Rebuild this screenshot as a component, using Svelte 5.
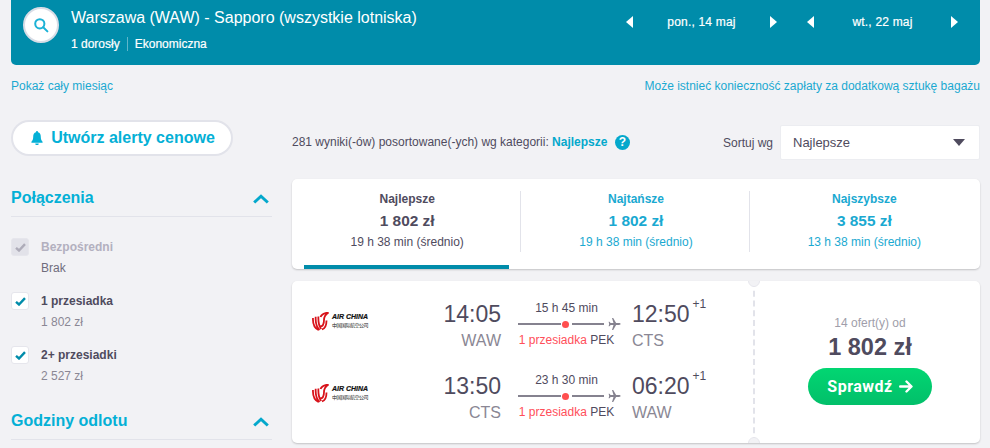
<script lang="ts">
  const tabs = [
    { name: "Najlepsze", price: "1 802 zł", time: "19 h 38 min (średnio)", active: true },
    { name: "Najtańsze", price: "1 802 zł", time: "19 h 38 min (średnio)", active: false },
    { name: "Najszybsze", price: "3 855 zł", time: "13 h 38 min (średnio)", active: false }
  ];

  const legs = [
    { dep: "14:05", from: "WAW", dur: "15 h 45 min", arr: "12:50", to: "CTS" },
    { dep: "13:50", from: "CTS", dur: "23 h 30 min", arr: "06:20", to: "WAW" }
  ];

  const dates = ["pon., 14 maj", "wt., 22 maj"];

  const stops = [
    { label: "Bezpośredni", price: "Brak", off: true },
    { label: "1 przesiadka", price: "1 802 zł", off: false },
    { label: "2+ przesiadki", price: "2 527 zł", off: false }
  ];
</script>

<div class="page">
  <header class="search">
    <div class="circle">
      <svg width="16" height="16" viewBox="0 0 16 16" fill="none" stroke="#1cb2d6" stroke-width="2">
        <circle cx="6.8" cy="6.800" r="4.600" />
        <path d="M10.200 10.200 14.400 14.400" stroke-linecap="round" />
      </svg>
    </div>
    <div class="route">
      <div class="title">Warszawa (WAW) - Sapporo (wszystkie lotniska)</div>
      <div class="meta"><span>1 dorosły</span><span class="sep">Ekonomiczna</span></div>
    </div>
    <div class="dates">
      {#each dates as d}
        <div class="date">
          <svg width="7" height="12" viewBox="0 0 7 12"><path d="M7 0v12L0 6z" fill="#fff" /></svg>
          <span>{d}</span>
          <svg width="7" height="12" viewBox="0 0 7 12"><path d="M0 0v12l7-6z" fill="#fff" /></svg>
        </div>
      {/each}
    </div>
  </header>

  <div class="links">
    <span>Pokaż cały miesiąc</span>
    <span>Może istnieć konieczność zapłaty za dodatkową sztukę bagażu</span>
  </div>

  <div class="columns">
    <aside>
      <button class="alert">
        <svg width="12" height="14" viewBox="0 0 14 15" fill="#04b0d6" preserveAspectRatio="none">
          <path d="M7 0a1.200 1.200 0 0 1 1.200 1.300C10.400 1.800 11.400 3.600 11.400 6c0 3 .8 4.400 2.100 5.600v.9H.5v-.9C1.800 10.400 2.600 9 2.600 6c0-2.400 1-4.200 3.200-4.700A1.200 1.200 0 0 1 7 0zM5 13.300h4A2 2 0 0 1 5 13.300z" />
        </svg>
        Utwórz alerty cenowe
      </button>

      <section class="group">
        <div class="group-head">
          <h3>Połączenia</h3>
          <svg width="16" height="10" viewBox="0 0 16 10" fill="none" stroke="#04a8cc" stroke-width="3"><path d="M1.200 8.500 8 2.200l6.800 6.300" /></svg>
        </div>
        {#each stops as s}
          <div class="stop" class:off={s.off}>
            <span class="check">
              <svg width="11" height="9" viewBox="0 0 11 9" fill="none" stroke-width="2.400"><path d="M1 4.800 4 7.500 10 1.200" /></svg>
            </span>
            <div>
              <div class="stop-label">{s.label}</div>
              <div class="stop-price">{s.price}</div>
            </div>
          </div>
        {/each}
      </section>

      <section class="group second">
        <div class="group-head">
          <h3>Godziny odlotu</h3>
          <svg width="16" height="10" viewBox="0 0 16 10" fill="none" stroke="#04a8cc" stroke-width="3"><path d="M1.200 8.500 8 2.200l6.800 6.300" /></svg>
        </div>
      </section>
    </aside>

    <main>
      <div class="toolbar">
        <div class="count">
          281 wyniki(-ów) posortowane(-ych) wg kategorii: <b>Najlepsze</b>
          <span class="help">?</span>
        </div>
        <div class="sort">
          <span class="sort-label">Sortuj wg</span>
          <div class="select">
            Najlepsze
            <svg width="12" height="7" viewBox="0 0 12 7"><path d="M0 0h12L6 7z" fill="#4f4b5e" /></svg>
          </div>
        </div>
      </div>

      <div class="tabs">
        {#each tabs as t}
          <div class="tab" class:active={t.active}>
            <div class="tab-body">
              <div class="tab-name">{t.name}</div>
              <div class="tab-price">{t.price}</div>
              <div class="tab-time">{t.time}</div>
            </div>
            {#if t.active}<div class="underline"></div>{/if}
          </div>
        {/each}
      </div>

      <article class="card">
        <div class="flights">
          {#each legs as l}
            <div class="leg">
              <div class="carrier">
                <svg width="17" height="19" viewBox="0 0 17 19" fill="none" stroke="#d8131b" stroke-width="1.800">
                  <path d="M1 6c-.3 5 1.500 10 5.500 12M3.700 4.800c-.3 5 .7 10 3.800 13.200M6.400 4.500C6.200 9 6.700 14 9.200 17" />
                  <path d="M8 14.500c3 0 4-3 4-6.500 0-3 1.300-5.500 4.500-7.500C12.500 1 9.500 2.500 8.500 5M10 17.500c3-1 4.500-4.500 4.500-9" />
                </svg>
                <div class="brand">
                  <span class="brand-en">AIR CHINA</span>
                  <span class="brand-cn">中国国际航空公司</span>
                </div>
              </div>
              <div class="dep">
                <div class="time">{l.dep}</div>
                <div class="code">{l.from}</div>
              </div>
              <div class="path">
                <div class="dur">{l.dur}</div>
                <div class="line">
                  <span class="bar"></span><span class="dot"></span><span class="bar short"></span>
                  <svg width="13" height="12" viewBox="0 0 13 12" fill="#85828f">
                    <path d="M12.600 6c0-.5-.8-.9-1.600-.9H8.100L5.200 0H4l1.500 5.100H2.600L1.500 3.700H.6L1.200 6 .6 8.300h.9l1.100-1.400h2.900L4 12h1.200l2.900-5.100H11c.8 0 1.600-.4 1.600-.9z" />
                  </svg>
                </div>
                <div class="via"><span>1 przesiadka</span> PEK</div>
              </div>
              <div class="arr">
                <div class="time">{l.arr}<sup>+1</sup></div>
                <div class="code">{l.to}</div>
              </div>
            </div>
          {/each}
        </div>
        <div class="divider"></div>
        <span class="notch top"></span>
        <span class="notch bottom"></span>
        <div class="offer">
          <div class="offers">14 ofert(y) od</div>
          <div class="price">1 802 zł</div>
          <button class="go">
            Sprawdź
            <svg width="14" height="13" viewBox="0 0 14 13" fill="none" stroke="#fff" stroke-width="2.400" stroke-linecap="round" stroke-linejoin="round"><path d="M1.200 6.500h11M7.500 1.500l5 5-5 5" /></svg>
          </button>
        </div>
      </article>
    </main>
  </div>
</div>

<style>
  :global(body) {
    background: #f2f2f5;
    font-family: "Liberation Sans", Arial, sans-serif;
    color: #4f4b5e;
  }

  .page {
    height: 448px;
    overflow: hidden;
    padding: 0 10px 0 11px;
  }

  .search {
    height: 65px;
    box-sizing: border-box;
    background: #008caa;
    border-radius: 0 0 5px 5px;
    display: flex;
    color: #fff;
    padding: 7px 0 0 12px;
  }

  .circle {
    width: 36px;
    height: 36px;
    box-sizing: border-box;
    border: 2px solid #d9dde6;
    border-radius: 50%;
    background: #fff;
    display: flex;
    align-items: center;
    justify-content: center;
  }

  .route {
    margin-left: 12px;
    flex: 1;
  }

  .title {
    font-size: 16px;
    line-height: 20px;
    margin-top: 1px;
  }

  .meta {
    font-size: 12px;
    margin-top: 9px;
    display: flex;
    line-height: 14px;
    -webkit-text-stroke: 0.2px #fff;
  }

  .sep {
    margin-left: 7px;
    padding-left: 7px;
    border-left: 1px solid #5fb6ca;
  }

  .dates {
    display: flex;
    gap: 30px;
    padding: 9px 22px 0 0;
  }

  .date {
    width: 151px;
    display: flex;
    justify-content: space-between;
    height: 12px;
    align-items: center;
    font-size: 12px;
    letter-spacing: 0.2px;
    -webkit-text-stroke: 0.2px #fff;
  }

  .links {
    display: flex;
    justify-content: space-between;
    font-size: 12px;
    color: #1aa9d1;
    margin-top: 14px;
    line-height: 14px;
  }

  .columns {
    display: flex;
    gap: 20px;
    margin-top: 27px;
  }

  aside {
    width: 261px;
    flex: none;
  }

  .alert {
    width: 222px;
    height: 36px;
    border: 2px solid #e2e3ea;
    border-radius: 18px;
    background: #fff;
    color: #04b0d6;
    font: bold 16px "Liberation Sans", sans-serif;
    display: flex;
    align-items: center;
    justify-content: center;
    gap: 8px;
    padding: 0 0 0 2px;
  }

  .group {
    margin-top: 27px;
  }

  .group.second {
    margin-top: 6px;
  }

  .group-head {
    display: flex;
    justify-content: space-between;
    align-items: center;
    border-bottom: 1px solid #e2e3ea;
    height: 28px;
    padding: 0 3px 5px 0;
    margin-bottom: 21px;
  }

  .group-head svg {
    margin-top: 4px;
  }

  .group-head h3 {
    margin: 2px 0 0;
    font-size: 16px;
    font-weight: bold;
    color: #04b0d6;
  }

  .stop {
    display: flex;
    gap: 12px;
    height: 54px;
    font-size: 12px;
  }

  .check {
    width: 18px;
    height: 18px;
    box-sizing: border-box;
    background: #fff;
    border: 1px solid #e6e6ec;
    border-radius: 3px;
    display: flex;
    align-items: center;
    justify-content: center;
    stroke: #008caa;
  }

  .off .check {
    background: #e2e2e9;
    stroke: #aeacb9;
  }

  .stop-label {
    font-weight: bold;
    line-height: 14px;
    margin-top: 2px;
  }

  .off .stop-label {
    color: #b3b0bf;
  }

  .stop-price {
    margin-top: 7px;
    line-height: 14px;
    color: #8a8794;
  }

  .off .stop-price {
    color: #6f6c7c;
  }

  main {
    flex: 1;
    min-width: 0;
  }

  .toolbar {
    display: flex;
    justify-content: space-between;
    align-items: center;
    height: 35px;
    margin-top: 5px;
    font-size: 12px;
  }

  .count b {
    color: #04a8cc;
  }

  .help {
    display: inline-block;
    width: 15px;
    height: 15px;
    border-radius: 50%;
    background: #04a8cc;
    color: #fff;
    font-weight: bold;
    font-size: 12px;
    line-height: 15px;
    text-align: center;
    margin-left: 4px;
  }

  .sort {
    display: flex;
    align-items: center;
    gap: 7px;
  }

  .select {
    width: 200px;
    height: 35px;
    box-sizing: border-box;
    background: #fff;
    border: 1px solid #ecedf1;
    border-radius: 2px;
    padding: 0 14px 0 12px;
    display: flex;
    justify-content: space-between;
    align-items: center;
    font-size: 13px;
  }

  .tabs {
    margin-top: 19px;
    height: 90px;
    background: #fff;
    border-radius: 5px;
    box-shadow: 0 1px 2px rgba(0, 0, 0, 0.2);
    display: flex;
    padding-right: 3px;
  }

  .tab {
    flex: 1;
    color: #1aa9d1;
    text-align: center;
    padding-top: 12px;
    box-sizing: border-box;
  }

  .tab.active {
    color: #4f4b5e;
  }

  .tab + .tab .tab-body {
    border-left: 1px solid #e2e3ea;
  }

  .tab-body {
    height: 61px;
    box-sizing: border-box;
    padding: 1px 0 0 2px;
  }

  .underline {
    height: 4px;
    background: #008caa;
    margin: 13px 11px 0 12px;
  }

  .tab-name {
    font-size: 12px;
    font-weight: bold;
    line-height: 14px;
  }

  .tab-price {
    font-size: 15.4px;
    font-weight: bold;
    line-height: 18px;
    margin-top: 6px;
  }

  .tab-time {
    font-size: 12px;
    line-height: 14px;
    margin-top: 5px;
  }

  .card {
    margin-top: 12px;
    height: 162px;
    background: #fff;
    border-radius: 5px;
    box-shadow: 0 1px 2px rgba(0, 0, 0, 0.2);
    display: flex;
    position: relative;
    overflow: hidden;
  }

  .flights {
    width: 460px;
    padding: 19px 0 0 20px;
    box-sizing: border-box;
  }

  .leg {
    display: flex;
    height: 72px;
  }

  .carrier {
    width: 131px;
    display: flex;
    gap: 3px;
    padding-top: 12px;
    height: 20px;
  }

  .brand {
    display: flex;
    flex-direction: column;
  }

  .brand-en {
    font-size: 7px;
    font-weight: bold;
    font-style: italic;
    color: #111;
    line-height: 8px;
    margin-top: 1px;
    white-space: nowrap;
    -webkit-text-stroke: 0.2px #111;
  }

  .brand-cn {
    font-family: "Noto Sans CJK SC", sans-serif;
    font-size: 5px;
    line-height: 8px;
    letter-spacing: -0.5px;
    color: #222;
    white-space: nowrap;
  }

  .dep {
    width: 58px;
    text-align: right;
  }

  .time {
    font-size: 23px;
    line-height: 28px;
    position: relative;
    white-space: nowrap;
  }

  .time sup {
    position: absolute;
    font-size: 12px;
    top: -3px;
    margin-left: 3px;
    line-height: 14px;
  }

  .code {
    font-size: 16px;
    line-height: 20px;
    color: #8a8794;
    margin-top: 3px;
  }

  .path {
    width: 114px;
    margin-left: 17px;
    font-size: 12px;
    text-align: center;
  }

  .dur {
    line-height: 14px;
    margin-top: 1px;
    width: 97px;
    white-space: nowrap;
  }

  .line {
    display: flex;
    align-items: center;
    height: 14px;
    margin-top: 2px;
  }

  .bar {
    width: 43px;
    height: 2px;
    background: #85828f;
  }

  .bar.short {
    width: 32px;
  }

  .dot {
    width: 7px;
    height: 7px;
    border-radius: 50%;
    background: #ff4f4f;
    margin: 0 3px 0 1px;
  }

  .line svg {
    margin-left: 4px;
  }

  .via {
    width: 97px;
    line-height: 14px;
    white-space: nowrap;
    margin-top: 2px;
  }

  .via span {
    color: #ff4f5a;
  }

  .divider {
    position: absolute;
    left: 461px;
    top: 0;
    bottom: 0;
    border-left: 2px dashed #e2e3ea;
  }

  .notch {
    position: absolute;
    left: 456px;
    width: 12px;
    height: 12px;
    box-sizing: border-box;
    border-radius: 50%;
    background: #f2f2f5;
    border: 1px solid #e6e6ec;
  }

  .notch.top {
    top: -6px;
  }

  .notch.bottom {
    bottom: -6px;
  }

  .offer {
    flex: 1;
    text-align: center;
    padding: 35px 0 0 8px;
    box-sizing: border-box;
  }

  .offers {
    font-size: 12px;
    line-height: 14px;
    color: #a09eaa;
  }

  .price {
    font-size: 23.5px;
    font-weight: bold;
    line-height: 26px;
    margin-top: 4px;
  }

  .go {
    width: 124px;
    height: 37px;
    border: none;
    border-radius: 19px;
    background: linear-gradient(#02d672, #02bf6a);
    color: #fff;
    font: bold 16px Roboto, sans-serif;
    letter-spacing: 0.5px;
    display: inline-flex;
    align-items: center;
    justify-content: center;
    gap: 6px;
    margin-top: 8px;
    padding: 0;
  }
</style>
